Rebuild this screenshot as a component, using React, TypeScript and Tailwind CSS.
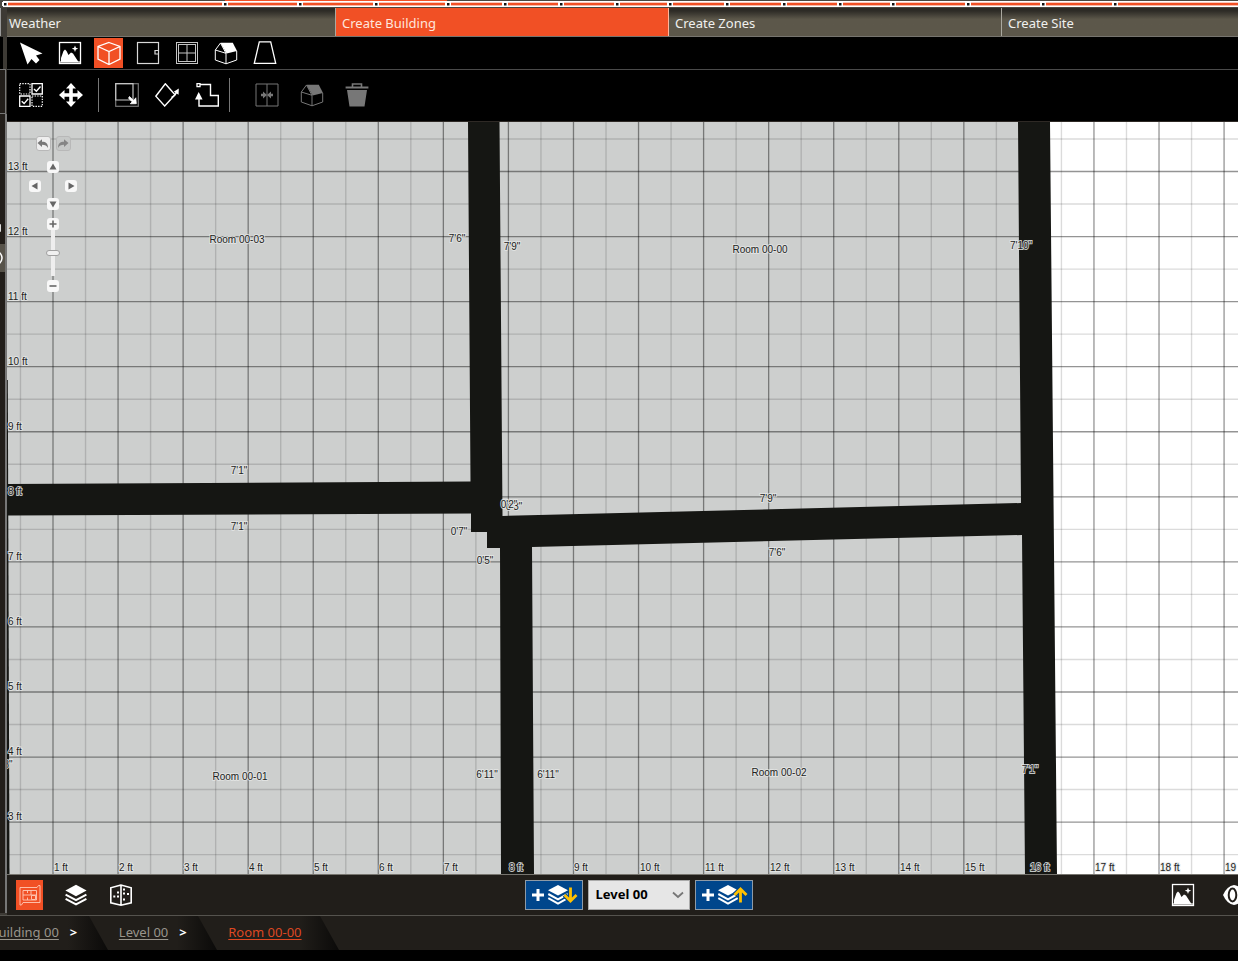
import { useState } from "react";
import type { ReactNode } from "react";

const HANDLES = [5, 225, 300, 376, 448, 505, 561, 617, 670, 727, 784, 840, 893, 968, 1043, 1115];
const TABS = ["Weather", "Create Building", "Create Zones", "Create Site"];

function Icon({ children, className = "" }: { children: ReactNode; className?: string }) {
  return (
    <svg viewBox="0 0 24 24" width="24" height="24" fill="none" stroke="currentColor" strokeWidth="1.2" className={`shrink-0 ${className}`} aria-hidden="true">
      {children}
    </svg>
  );
}

const CursorIcon = () => (
  <Icon>
    <path d="M1 1.5 23.5 12.5 17 14.5 20.5 19 17 22.5 12.5 18 8.5 23.5Z" fill="currentColor" stroke="none" />
  </Icon>
);

const PictureIcon = () => (
  <Icon>
    <rect x="1.5" y="1.5" width="21" height="21" strokeWidth="1.3" />
    <path d="M3 21V17L5.5 10 7 8.5 8.5 10 10.5 14 13 11.5 15 12.5 20.5 21Z" fill="currentColor" stroke="none" />
    <path d="M17 4.5 17.9 6.8 20.2 7.7 17.9 8.6 17 11 16.1 8.6 13.8 7.7 16.1 6.8Z" fill="currentColor" stroke="none" />
    <path d="M2 21H22" />
  </Icon>
);

const CubeIcon = () => (
  <Icon>
    <path d="M12 1.5 23 5.5V18L12 23.5 1 18V5.5ZM1 5.5 12 10.5 23 5.5M12 10.5V23.5" strokeWidth="1.3" />
  </Icon>
);

const DoorIcon = () => (
  <Icon className="text-[#d8d8d8]">
    <rect x="1.5" y="1.5" width="21" height="21" />
    <path d="M22 9.5H19V13H22" />
  </Icon>
);

const WindowIcon = () => (
  <Icon className="text-[#c4c4c4]">
    <rect x="1.5" y="1.5" width="21" height="21" strokeWidth="1" />
    <rect x="3.5" y="3.5" width="17" height="17" strokeWidth="1" />
    <path d="M12 3.5V20.5M3.5 12H20.5" strokeWidth="1" />
  </Icon>
);

const HouseIcon = () => (
  <Icon>
    <path d="M6.5 2 1.3 9V19L12 22.8 22.7 19V10M1.3 9 12 12.3M12 12.3V22.8M12 12.3 6.5 2" strokeWidth="1" />
    <path d="M6.5 1.7H18.8L23 10 12.6 12.6Z" fill="currentColor" stroke="none" />
  </Icon>
);

const RoofIcon = () => (
  <Icon>
    <path d="M6.3 .8H17.7L22.7 22.3H1.3Z" strokeWidth="1.3" />
  </Icon>
);

const MultiSelectIcon = () => (
  <Icon>
    <path d="M.7 .7H11V11H.7ZM13 13H23.3V23.3H13Z" strokeDasharray="1.4 1.2" />
    <path d="M13 .7H23.3V11H13ZM.7 13H11V23.3H.7Z" strokeWidth="1.3" />
    <path d="M15 6 17.4 8.3 21.5 3.5M2.7 18.3 5.1 20.6 9.2 15.8" strokeWidth="1.4" />
  </Icon>
);

const MoveIcon = () => (
  <Icon>
    <path d="M12 0 17 5.5H13.8V10.2H18.5V7L24 12 18.5 17V13.8H13.8V18.5H17L12 24 7 18.5H10.2V13.8H5.5V17L0 12 5.5 7V10.2H10.2V5.5H7Z" fill="currentColor" stroke="none" />
  </Icon>
);

const ResizeIcon = () => (
  <Icon>
    <rect x=".7" y=".7" width="22.6" height="22.6" className="stroke-[#777777]" />
    <path d="M.7 .7H18V17H.7Z" className="stroke-[#c4c4c4]" />
    <path d="M14.5 13.5 18.7 17.5 20.8 14.8 21.3 20.7 15.3 20.8 17.2 18.8 13.5 15.2Z" fill="currentColor" strokeWidth=".8" />
  </Icon>
);

const RotateIcon = () => (
  <Icon>
    <path d="M10.3 .8 20 11.8 9.7 23 .8 13.2Z" strokeWidth="1.4" />
    <path d="M16.5 14.5Q20 13 22 8.5" strokeWidth="1.4" />
    <path d="M23.8 5.5 23.6 11.8 18.8 8.8Z" fill="currentColor" stroke="none" />
  </Icon>
);

const PolygonIcon = () => (
  <Icon>
    <path d="M5 1.5H15.5V12.5H23.3V23H4V15" strokeWidth="1.4" />
    <rect x="2" y=".6" width="3" height="3" strokeWidth="1.3" />
    <path d="M3.7 9 7.6 16.5H0Z" fill="currentColor" stroke="none" />
  </Icon>
);

const MergeIcon = () => (
  <Icon>
    <path d="M1 1H23V23H1ZM12 1V23" strokeWidth="1" />
    <path d="M6 12H10M14 12H18" strokeWidth="2.6" />
    <path d="M8 8.5 12 12 8 15.5ZM16 8.5 12 12 16 15.5Z" fill="currentColor" stroke="none" />
  </Icon>
);

const TrashIcon = () => (
  <Icon>
    <path d="M.6 3.5H23.4V5.5H.6ZM2 7H22L19.5 23.5H4.5Z" fill="currentColor" stroke="none" />
    <path d="M7.5 4V1H16.5V4" strokeWidth="1.6" />
  </Icon>
);

const PlanIcon = () => (
  <Icon>
    <path d="M2 4.5H19L20.5 2.5H22V19.5H5L3.5 22H2V4.5ZM5 7.5V17H18.5V7.5H5M9.5 7.5V10M9.5 14.5V17M5 12H18.5M13 7.5V12M13.5 12.5H17.5V16.5H13.5Z" strokeWidth=".9" />
  </Icon>
);

const LayersIcon = () => (
  <Icon>
    <path d="M12 1.8 22.6 7.5 12 13.2 1.4 7.5Z" fill="currentColor" stroke="none" />
    <path d="M1.6 11.6 12 17.2 22.4 11.6M1.6 15.8 12 21.4 22.4 15.8" strokeWidth="2" />
  </Icon>
);

const FacadeIcon = () => (
  <Icon>
    <path d="M12 2 1.8 4.8V19.8L12 22.3 22.2 19.8V4.8ZM12 2V22.3" strokeWidth="1.6" />
    <path d="M4.3 12.5H6.3V14.5H4.3ZM8 8.5H10V10.5H8ZM8 12.5H10V14.5H8ZM14 5.5H16V7.5H14ZM14 9.5H16V11.5H14ZM18 10H20V12H18ZM14 15.5H16V17.5H14Z" fill="currentColor" stroke="none" />
  </Icon>
);

function AddLevelIcon({ up }: { up: boolean }) {
  return (
    <svg viewBox="0 0 48 26" width="48" height="26" fill="none" aria-hidden="true">
      <path d="M2 13H14M8 7V19" stroke="white" strokeWidth="3" />
      <path d="M28 3 38 8.3 28 13.6 18 8.3Z" fill="white" />
      <path d="M18.3 12 28 17.3 37.7 12M18.3 16.2 28 21.6 37.7 16.2" stroke="white" strokeWidth="2" />
      <path d={up ? "M40.5 20.5V8M34.5 13 40.5 7 46.5 13" : "M40.5 5.5V18M34.5 13 40.5 19 46.5 13"} stroke="#00468c" strokeWidth="5" />
      <path d={up ? "M40.5 20.5V8M34.5 13 40.5 7 46.5 13" : "M40.5 5.5V18M34.5 13 40.5 19 46.5 13"} stroke="#ffc000" strokeWidth="2.8" />
    </svg>
  );
}

const TOOLS = [
  { label: "Select", icon: <CursorIcon /> },
  { label: "Image", icon: <PictureIcon /> },
  { label: "Room", icon: <CubeIcon /> },
  { label: "Door", icon: <DoorIcon /> },
  { label: "Window", icon: <WindowIcon /> },
  { label: "House", icon: <HouseIcon /> },
  { label: "Roof", icon: <RoofIcon /> },
];

function ToolButton({ label, children, disabled = false }: { label: string; children: ReactNode; disabled?: boolean }) {
  return (
    <button type="button" aria-label={label} disabled={disabled} className="flex h-8 w-[29px] items-center justify-center text-white disabled:text-[#777777]">
      {children}
    </button>
  );
}

function ModelTabs() {
  return (
    <nav className="flex h-7 overflow-hidden bg-[#5a564a]">
      {TABS.map((tab, i) => (
        <button
          key={tab}
          type="button"
          className={`flex w-[333px] shrink-0 items-center border-r px-[6px] pt-1 text-[13px] ${
            i === 1 ? "border-[#ffb59c] bg-[#f15025] text-[#ffe6dc]" : "border-[#aaa89f] bg-linear-to-b from-[#2d2b26] from-10% to-[#5c574a] to-40% text-[#f0f0ee]"
          } ${i === 0 ? "-ml-1" : ""}`}
        >
          {tab}
        </button>
      ))}
    </nav>
  );
}

/* Page coordinates; the group is shifted by the origin of the canvas. */
const PITCH = 65.06;
const xOf = (ft: number) => 53 + (ft - 1) * PITCH;
const yOf = (ft: number) => 171.5 + (13 - ft) * PITCH;
const range = (from: number, to: number) => Array.from({ length: to - from + 1 }, (_, i) => from + i);

const DIMENSIONS: [string, number, number][] = [
  ["Room 00-03", 237, 243],
  ["Room 00-00", 760, 253],
  ["Room 00-01", 240, 780],
  ["Room 00-02", 779, 776],
  ["7'6\"", 457, 242],
  ["7'9\"", 512, 250],
  ["7'10\"", 1021, 249],
  ["7'1\"", 239, 474],
  ["7'1\"", 239, 530],
  ["0'7\"", 459, 535],
  ["0'5\"", 485, 564],
  ["0'3\"", 514, 510],
  ["0'2\"", 509, 508],
  ["7'9\"", 768, 502],
  ["7'6\"", 777, 556],
  ["6'11\"", 487, 778],
  ["6'11\"", 548, 778],
  ["7'1\"", 1030, 773],
  ["8\"", 8, 768],
];

function FloorPlan() {
  return (
    <svg className="absolute inset-0 h-full w-full" role="img" aria-label="Floor plan of level 00">
      <g transform="translate(-7 -122)">
        <rect x="0" y="0" width="3000" height="3000" fill="#ffffff" />
        <path d="M0 0H1034L1041 874V3000H0Z" fill="#cdcfce" />
        <g stroke="#000000" strokeOpacity=".14" strokeWidth="1.4">
          {range(0, 40).map((n) => <path key={`v${n}`} d={`M${xOf(n + 0.5)} 0V3000`} />)}
          {range(-20, 14).map((n) => <path key={`h${n}`} d={`M0 ${yOf(n - 0.5)}H3000`} />)}
        </g>
        <g stroke="#000000" strokeOpacity=".42" strokeWidth="1.3">
          {range(1, 40).map((n) => <path key={`v${n}`} d={`M${xOf(n)} 0V3000`} />)}
          {range(-20, 14).map((n) => <path key={`h${n}`} d={`M0 ${yOf(n)}H3000`} />)}
        </g>
        <g fill="#151613">
          <path d="M468 122H499.5L502.5 516 1021 503 1018 122H1050L1057 874H1025L1022 535 532 547 534 874H501L500 548H487V532H471V513.5L7 515.5V484L470.5 481.5Z" />
          <path d="M7 380H7.8L9.5 874H7Z" />
        </g>
        <g fontFamily='"Liberation Sans", Arial, sans-serif' fontSize="10" fill="#222222" stroke="#e4e6e5" strokeWidth="1.8" strokeOpacity=".85" style={{ paintOrder: "stroke" }}>
          {range(3, 13).map((n) => <text key={n} x="8" y={Math.round(yOf(n)) - 2}>{n} ft</text>)}
          {range(1, 19).map((n) => <text key={n} x={Math.round(xOf(n)) + 1} y="871">{n} ft</text>)}
          {DIMENSIONS.map(([text, x, y]) => <text key={`${x}-${y}`} x={x} y={y} textAnchor="middle">{text}</text>)}
        </g>
      </g>
    </svg>
  );
}

const padButton = "flex size-3 items-center justify-center rounded-[3px] bg-[#f8f8f8] text-[#666666]";

function Glyph({ d }: { d: string }) {
  return (
    <svg viewBox="0 0 12 12" width="12" height="12" fill="currentColor" aria-hidden="true">
      <path d={d} />
    </svg>
  );
}

function ViewControls() {
  const [zoom, setZoom] = useState(50);
  return (
    <div className="absolute left-[22px] top-[14px] flex w-12 flex-col items-center">
      <div className="flex gap-[5px]">
        <button type="button" aria-label="Undo" className="flex size-[15px] items-center justify-center rounded-[3px] border border-[#b8b8b8] bg-[#eeeeee] text-[#777777]">
          <Glyph d="M.5 5 5 1.2V3.7C9 3.7 11 5.5 11 10 9.8 7.5 8.2 6.7 5 6.7V9Z" />
        </button>
        <button type="button" aria-label="Redo" className="flex size-[15px] items-center justify-center rounded-[3px] border border-[#b8b8b8] bg-[#c6c8c7] text-[#858585]">
          <Glyph d="M11.5 5 7 1.2V3.7C3 3.7 1 5.5 1 10 2.2 7.5 3.8 6.7 7 6.7V9Z" />
        </button>
      </div>
      <button type="button" aria-label="Pan up" className={`mt-[10px] ${padButton}`}><Glyph d="M6 2.5 9.5 8.5H2.5Z" /></button>
      <div className="mt-[7px] flex w-12 justify-between">
        <button type="button" aria-label="Pan left" className={padButton}><Glyph d="M2.5 6 8.5 2.5V9.5Z" /></button>
        <button type="button" aria-label="Pan right" className={padButton}><Glyph d="M9.5 6 3.5 2.5V9.5Z" /></button>
      </div>
      <button type="button" aria-label="Pan down" className={`mt-[6px] ${padButton}`}><Glyph d="M6 9.5 2.5 3.5H9.5Z" /></button>
      <button type="button" aria-label="Zoom in" className={`mt-2 ${padButton}`}><Glyph d="M5.2 2.5H6.8V5.2H9.5V6.8H6.8V9.5H5.2V6.8H2.5V5.2H5.2Z" /></button>
      <input
        type="range"
        aria-label="Zoom"
        value={zoom}
        onChange={(e) => setZoom(Number(e.target.value))}
        className="my-[2px] h-[46px] w-[14px] appearance-none bg-transparent [direction:rtl] [writing-mode:vertical-lr] [&::-webkit-slider-runnable-track]:mx-auto [&::-webkit-slider-runnable-track]:h-[46px] [&::-webkit-slider-runnable-track]:w-[14px] [&::-webkit-slider-runnable-track]:bg-[linear-gradient(to_right,transparent_5px,#eeeeee_5px,#eeeeee_9px,transparent_9px)] [&::-webkit-slider-thumb]:h-[6px] [&::-webkit-slider-thumb]:w-[14px] [&::-webkit-slider-thumb]:appearance-none [&::-webkit-slider-thumb]:rounded-full [&::-webkit-slider-thumb]:border [&::-webkit-slider-thumb]:border-[#a0a0a0] [&::-webkit-slider-thumb]:bg-[#f0f0f0]"
      />
      <button type="button" aria-label="Zoom out" className={`mt-1 ${padButton}`}><Glyph d="M2.5 5.2H9.5V6.8H2.5Z" /></button>
    </div>
  );
}

function SideRail() {
  return (
    <aside className="flex w-[7px] shrink-0 flex-col overflow-hidden bg-[#3d3a35]">
      <div className="h-7 w-[1px] bg-[#9a9a9a]" />
      <div className="mt-px h-8 w-[3px] bg-black" />
      <div className="h-[45px] w-[6px] border-y border-r border-[#777777] bg-[#221e1a]" />
      <div className="mb-[2px] flex flex-1 flex-col border-r-2 border-[#777777] bg-[#221e1a]">
        <div className="h-[110px]" />
        <div className="h-2 w-[1px] rounded-r bg-[#dddddd]" />
        <div className="mt-3 flex h-7 items-center bg-[#57534a]">
          <svg viewBox="0 0 4 18" width="4" height="18" fill="none" stroke="white" strokeWidth="1.5" aria-hidden="true"><path d="M-1 3Q5 9 -1 15" /></svg>
        </div>
      </div>
    </aside>
  );
}

function LevelBar() {
  const addButton = "flex h-[30px] w-[58px] items-center justify-center border border-[#8e9aa6] bg-[#00468c]";
  return (
    <div className="-mr-8 flex h-[41px] shrink-0 items-center border-t border-[#77756f] text-white">
      <div className="flex flex-1 items-center gap-[21px] pl-[9px] pr-[15px]">
        <button type="button" aria-label="Plan view" className="flex h-[30px] w-[27px] items-center justify-center bg-[#f15025] text-[#ffc9b8]"><PlanIcon /></button>
        <button type="button" aria-label="Levels"><LayersIcon /></button>
        <button type="button" aria-label="Building view"><FacadeIcon /></button>
      </div>
      <div className="flex items-center gap-[5px]">
        <button type="button" aria-label="Add level below" className={addButton}><AddLevelIcon up={false} /></button>
        <div className="relative">
          <select aria-label="Level" className="h-[30px] w-[102px] appearance-none rounded-none border border-[#aaaaaa] bg-[#e6e6e6] pl-[7px] text-[13px] font-bold text-black">
            <option>Level 00</option>
          </select>
          <svg viewBox="0 0 12 12" width="12" height="12" fill="none" stroke="#777777" strokeWidth="1.8" className="pointer-events-none absolute right-[6px] top-[9px]" aria-hidden="true"><path d="M1 3.5 6 8 11 3.5" /></svg>
        </div>
        <button type="button" aria-label="Add level above" className={addButton}><AddLevelIcon up /></button>
      </div>
      <div className="flex flex-1 items-center justify-end gap-[27px] pr-6">
        <button type="button" aria-label="Background image"><PictureIcon /></button>
        <button type="button" aria-label="Visibility">
          <Icon>
            <path d="M1 12Q5 3 12 2 19 3 23 12 19 21 12 22 5 21 1 12Z" fill="currentColor" stroke="none" />
            <ellipse cx="10.5" cy="12" rx="3.8" ry="6.5" stroke="#211e1a" strokeWidth="2" />
          </Icon>
        </button>
      </div>
    </div>
  );
}

function CrumbEdge() {
  return (
    <svg viewBox="0 0 40 34" width="40" height="34" className="-ml-[10px] shrink-0" aria-hidden="true">
      <defs>
        <linearGradient id="crumb-shade">
          <stop offset="0" stopColor="#211e1a" />
          <stop offset="1" stopColor="#0b0a09" />
        </linearGradient>
      </defs>
      <path d="M0 0H21L40 34H0Z" fill="url(#crumb-shade)" />
    </svg>
  );
}

function Breadcrumbs() {
  return (
    <nav aria-label="Breadcrumb" className="flex h-[35px] shrink-0 items-center overflow-hidden whitespace-nowrap border-t border-[#55534e] text-[13px] text-[#99958c]">
      <a href="#building" className="-ml-[10px] underline underline-offset-2">Building 00</a>
      <span className="relative z-10 ml-[11px] w-2 font-bold text-white">&gt;</span>
      <CrumbEdge />
      <a href="#level" className="ml-[11px] underline underline-offset-2">Level 00</a>
      <span className="relative z-10 ml-[11px] w-2 font-bold text-white">&gt;</span>
      <CrumbEdge />
      <a href="#room" className="relative z-10 ml-[11px] text-[#dd4822] underline underline-offset-2">Room 00-00</a>
      <span className="w-[7px]" />
      <CrumbEdge />
    </nav>
  );
}

export default function App() {
  const [tool, setTool] = useState("Room");
  return (
    <div className="flex h-screen flex-col overflow-hidden bg-[#211e1a] font-['Noto_Sans','Open_Sans',sans-serif]">
      <svg className="h-2 w-full shrink-0 bg-[#4a4741]" aria-hidden="true">
        <rect x="225" y="0" width="222" height="1" fill="#f15025" />
        <rect x="3" y="1" width="3000" height="6" fill="#ffffff" />
        <rect x="3" y="2.7" width="3000" height="2.7" fill="#f15025" />
        {HANDLES.map((x) => (
          <g key={x}>
            <rect x={x - 3} y="2" width="6" height="4" fill="#ffffff" />
            <rect x={x - 1} y="3" width="2.5" height="2.5" fill="#111111" />
          </g>
        ))}
      </svg>
      <div className="flex min-h-0 flex-1">
        <SideRail />
        <main className="flex min-w-0 flex-1 flex-col">
          <ModelTabs />
          <div role="toolbar" aria-label="Elements" className="flex h-[34px] shrink-0 items-center gap-[10px] border-y border-t-[#77756f] border-b-[#4a4a4a] bg-black pl-[9px] text-white">
            {TOOLS.map((t) => (
              <button
                key={t.label}
                type="button"
                aria-label={t.label}
                aria-pressed={tool === t.label}
                onClick={() => setTool(t.label)}
                className={`flex h-[30px] w-[29px] items-center justify-center ${tool === t.label ? "bg-[#f15025]" : ""}`}
              >
                {t.icon}
              </button>
            ))}
          </div>
          <div role="toolbar" aria-label="Edit" className="flex h-[52px] shrink-0 items-center border-b border-[#2e2925] bg-black pb-[2px] pl-[9px]">
            <div className="flex gap-[11px]">
              <ToolButton label="Select several"><MultiSelectIcon /></ToolButton>
              <ToolButton label="Move"><MoveIcon /></ToolButton>
            </div>
            <div className="mx-[13px] h-[34px] w-px bg-[#777777]" />
            <div className="flex gap-[11px]">
              <ToolButton label="Resize"><ResizeIcon /></ToolButton>
              <ToolButton label="Rotate"><RotateIcon /></ToolButton>
              <ToolButton label="Edit outline"><PolygonIcon /></ToolButton>
            </div>
            <div className="ml-2 mr-[22px] h-[34px] w-px bg-[#777777]" />
            <div className="flex gap-4">
              <ToolButton label="Merge" disabled><MergeIcon /></ToolButton>
              <ToolButton label="Convert to house" disabled><HouseIcon /></ToolButton>
              <ToolButton label="Delete" disabled><TrashIcon /></ToolButton>
            </div>
          </div>
          <section className="relative min-h-0 flex-1 overflow-hidden">
            <FloorPlan />
            <ViewControls />
          </section>
          <LevelBar />
        </main>
      </div>
      <Breadcrumbs />
      <div className="h-[11px] shrink-0 bg-black" />
    </div>
  );
}
